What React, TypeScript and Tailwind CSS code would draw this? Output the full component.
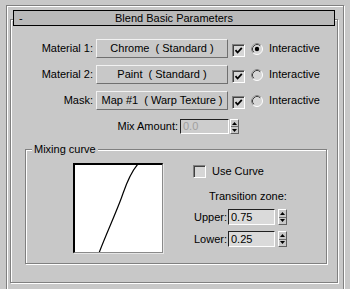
import React from "react";

const font = { fontFamily: '"Liberation Sans", Arial, sans-serif' };

function Check({ checked }: { checked: boolean }) {
  return (
    <div className="w-[13px] h-[13px] shrink-0 border border-t-[#808080] border-l-[#808080] border-r-white border-b-white bg-[#d6d6d6] shadow-[inset_1px_1px_0_#404040] flex items-center justify-center">
      {checked && (
        <svg width="11" height="11" viewBox="0 0 11 11">
          <path d="M2.5 5.2 L4.6 7.5 L8.8 2.8" fill="none" stroke="#000" strokeWidth="1.8" />
        </svg>
      )}
    </div>
  );
}

function Radio({ on }: { on: boolean }) {
  return (
    <svg width="12" height="12" viewBox="0 0 12 12" className="shrink-0">
      <circle cx="6" cy="6" r="5.5" fill="#d6d6d6" stroke="#ffffff" strokeWidth="1" />
      <path d="M2.11 9.89 A5.5 5.5 0 0 1 9.89 2.11" fill="none" stroke="#808080" strokeWidth="1" />
      <path d="M2.82 9.18 A4.5 4.5 0 0 1 9.18 2.82" fill="none" stroke="#404040" strokeWidth="1" />
      {on && <circle cx="6" cy="6" r="2.2" fill="#000" />}
    </svg>
  );
}

function Spinner({ h }: { h: string }) {
  return (
    <div className={`w-[9px] ${h} shrink-0 flex flex-col border border-t-white border-l-white border-r-[#606060] border-b-[#606060] bg-[#c8c8c8]`}>
      <div className="flex-1 flex items-center justify-center border-b border-b-[#707070]">
        <svg width="5" height="3" viewBox="0 0 5 3">
          <path d="M2.5 0 L5 3 L0 3 Z" fill="#000" />
        </svg>
      </div>
      <div className="flex-1 flex items-center justify-center">
        <svg width="5" height="3" viewBox="0 0 5 3">
          <path d="M0 0 L5 0 L2.5 3 Z" fill="#000" />
        </svg>
      </div>
    </div>
  );
}

function Field({ value, disabled, w, h }: { value: string; disabled?: boolean; w: string; h: string }) {
  return (
    <div
      className={`${w} ${h} shrink-0 border border-t-[#202020] border-l-[#202020] border-r-white border-b-white ${
        disabled ? "bg-[#cdcdcd] text-[#a0a0a0]" : "bg-[#dadada] text-black"
      } pl-[2px] flex items-center leading-[13px]`}
    >
      {value}
    </div>
  );
}

function MatRow({ label, button, radio }: { label: string; button: string; radio: boolean }) {
  return (
    <div className="flex items-center h-[19px]">
      <div className="w-[82px] text-right leading-[13px]">{label}</div>
      <div className="ml-[3px] w-[132px] h-[19px] flex items-center justify-center overflow-hidden whitespace-pre border border-t-[#f2f2f2] border-l-[#f2f2f2] border-r-[#707070] border-b-[#707070] bg-[#c8c8c8] leading-[13px]">
        {button}
      </div>
      <div className="ml-[4px] mt-[3px]">
        <Check checked={true} />
      </div>
      <div className="ml-[6px] flex">
        <Radio on={radio} />
      </div>
      <div className="ml-[6px] leading-[13px]">Interactive</div>
    </div>
  );
}

export default function App() {
  return (
    <div className="w-[350px] h-[289px] overflow-hidden bg-[#c8c8c8] pt-[5px] pl-[6px] text-[11px] text-black" style={font}>
      <div className="w-[338px] h-[300px] border border-[#808080] shadow-[inset_1px_1px_0_#fff,1px_1px_0_#fff] pt-[13px] pl-[3px]">
        <div className="w-[328px] h-[264px] border border-[#808080] shadow-[inset_1px_1px_0_#fff,1px_1px_0_#fff]">
          <div className="-mt-[10px] ml-[2px] w-[322px] h-[16px] border border-black bg-[#b9b9b9] grid grid-cols-[1fr_auto_1fr] items-center leading-[13px]">
            <div className="pl-[5px]">-</div>
            <div>Blend Basic Parameters</div>
            <div />
          </div>

          <div className="mt-[13px] flex flex-col gap-[7px]">
            <MatRow label="Material 1:" button="Chrome  ( Standard )" radio={true} />
            <MatRow label="Material 2:" button="Paint  ( Standard )" radio={false} />
            <MatRow label="Mask:" button="Map #1  ( Warp Texture )" radio={false} />
          </div>

          <div className="mt-[9px] flex items-center h-[15px]">
            <div className="w-[167px] text-right leading-[13px]">Mix Amount:</div>
            <div className="ml-[2px]">
              <Field value="0.0" disabled w="w-[49px]" h="h-[15px]" />
            </div>
            <div className="ml-[1px]">
              <Spinner h="h-[15px]" />
            </div>
          </div>

          <div className="mt-[15px] ml-[14px] w-[302px] h-[115px] border border-[#808080] shadow-[inset_1px_1px_0_#fff,1px_1px_0_#fff]">
            <div className="-mt-[7px] ml-[6px] w-fit px-[2px] h-[13px] leading-[13px] bg-[#c8c8c8]">Mixing curve</div>
            <div className="mt-[7px] flex">
              <div className="ml-[47px] w-[90px] h-[90px] shrink-0 border-t-2 border-l-2 border-t-black border-l-black border-r border-b border-r-[#8a8a8a] border-b-[#8a8a8a] shadow-[1px_1px_0_#e6e6e6] bg-white overflow-hidden">
                <svg width="87" height="87" viewBox="0 0 87 87">
                  <path
                    d="M24 88 C30 72 40 50 46 34 C49.75 24 54 8 64 -2"
                    fill="none"
                    stroke="#000"
                    strokeWidth="1.2"
                  />
                </svg>
              </div>
              <div className="ml-[30px] flex flex-col">
                <div className="mt-[2px] h-[13px] flex items-center">
                  <Check checked={false} />
                  <div className="ml-[6px] leading-[13px]">Use Curve</div>
                </div>
                <div className="mt-[12px] ml-[16px] leading-[13px] whitespace-nowrap">Transition zone:</div>
                <div className="mt-[6px] h-[16px] flex items-center">
                  <div className="ml-[1px] w-[34px] leading-[13px]">Upper:</div>
                  <Field value="0.75" w="w-[47px]" h="h-[16px]" />
                  <div className="ml-[3px]">
                    <Spinner h="h-[16px]" />
                  </div>
                </div>
                <div className="mt-[6px] h-[16px] flex items-center">
                  <div className="ml-[1px] w-[34px] leading-[13px]">Lower:</div>
                  <Field value="0.25" w="w-[47px]" h="h-[16px]" />
                  <div className="ml-[3px]">
                    <Spinner h="h-[16px]" />
                  </div>
                </div>
              </div>
            </div>
          </div>
        </div>
      </div>
    </div>
  );
}
